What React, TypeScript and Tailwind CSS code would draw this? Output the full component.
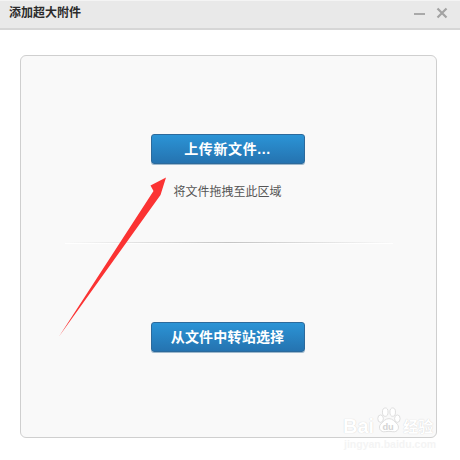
import React from "react";

const font = { fontFamily: '"Liberation Sans", "Noto Sans CJK SC", sans-serif' };

function Btn({ children, tracking }: { children: React.ReactNode; tracking: string }) {
  return (
    <div className={`w-[154px] h-[30px] rounded-[3px] border border-[#2c6a9c] bg-gradient-to-b from-[#2b94d6] to-[#2573b0] shadow-[0_1px_0_#9db8cc] flex items-center justify-center text-white text-[14px] font-bold ${tracking}`}>
      {children}
    </div>
  );
}

export default function App() {
  return (
    <div className="relative w-[460px] h-[460px] bg-white overflow-hidden" style={font}>
      <div className="h-[30px] bg-[#e9e9e9] border-t border-t-[#f4f4f4] border-b-2 border-b-[#d6d6d6] flex items-center pl-[9px] pr-[12px] pb-[3px]">
        <span className="text-[12px] font-bold text-[#2b2b2b]">添加超大附件</span>
        <div className="ml-auto flex items-center gap-[11px]">
          <svg width="11" height="11" viewBox="0 0 11 11"><path d="M0 6h11" stroke="#a9a9a9" strokeWidth="2" /></svg>
          <svg width="12" height="12" viewBox="0 0 12 12"><path d="M1.5 1.5l9 9M10.5 1.5l-9 9" stroke="#a3a3a3" strokeWidth="2.2" /></svg>
        </div>
      </div>
      <div className="mt-[25px] ml-[20px] w-[417px] h-[383px] rounded-[6px] border border-[#cfcfcf] bg-[#f9f9f9] flex flex-col items-center pt-[78px] pr-[2px]">
        <Btn tracking="tracking-[0.6px]">上传新文件...</Btn>
        <div className="mt-[20px] text-[12px] leading-[16px] text-[#555555]">将文件拖拽至此区域</div>
        <div className="mt-[42px] ml-[2px] w-[328px] flex flex-col">
          <div className="h-px bg-gradient-to-r from-[#f9f9f9] via-[#c4c4c4] to-[#f9f9f9]" />
          <div className="h-px bg-gradient-to-r from-white via-[#fdfdfd] to-white" />
        </div>
        <div className="mt-[78px]">
          <Btn tracking="tracking-[0.2px]">从文件中转站选择</Btn>
        </div>
      </div>

      <svg className="absolute left-0 top-0" width="460" height="460" viewBox="0 0 460 460">
        <path d="M59 336.5 L153.5 191 L150.5 185.5 L166 177.5 L160.5 195 Z" fill="#fb3333" />
      </svg>

      <div className="absolute left-[343px] top-[406px] w-[100px] text-white">
        <div className="flex items-end h-[29px]">
          <span className="text-[20px] font-bold leading-[18px] [text-shadow:0_0_1px_#c9c9c9]">Bai</span>
          <svg width="27" height="29" viewBox="0 0 29 30" className="ml-[1px]">
            <g fill="#ffffff" stroke="#dcdcdc" strokeWidth="1">
              <ellipse cx="6" cy="13" rx="3" ry="4" />
              <ellipse cx="11" cy="6" rx="3" ry="4.5" />
              <ellipse cx="19" cy="6" rx="3" ry="4.5" />
              <ellipse cx="24" cy="13" rx="3" ry="4" />
              <path d="M15 13c4 0 6 3 9 6 3 4 0 9-5 8-3-.5-5-.5-8 0-5 1-8-4-5-8 3-3 5-6 9-6z" />
            </g>
            <text x="8" y="25" fontSize="10" fontWeight="700" fill="#d4d4d4">du</text>
          </svg>
          <span className="ml-[1px] text-[15px] font-bold leading-[17px] [text-shadow:0_0_1px_#c9c9c9]">经验</span>
        </div>
        <div className="mt-[5px] ml-[1px] text-[10.5px] leading-[9px] font-bold whitespace-nowrap text-[#f4f4f4]">jingyan.baidu.com</div>
      </div>
    </div>
  );
}
